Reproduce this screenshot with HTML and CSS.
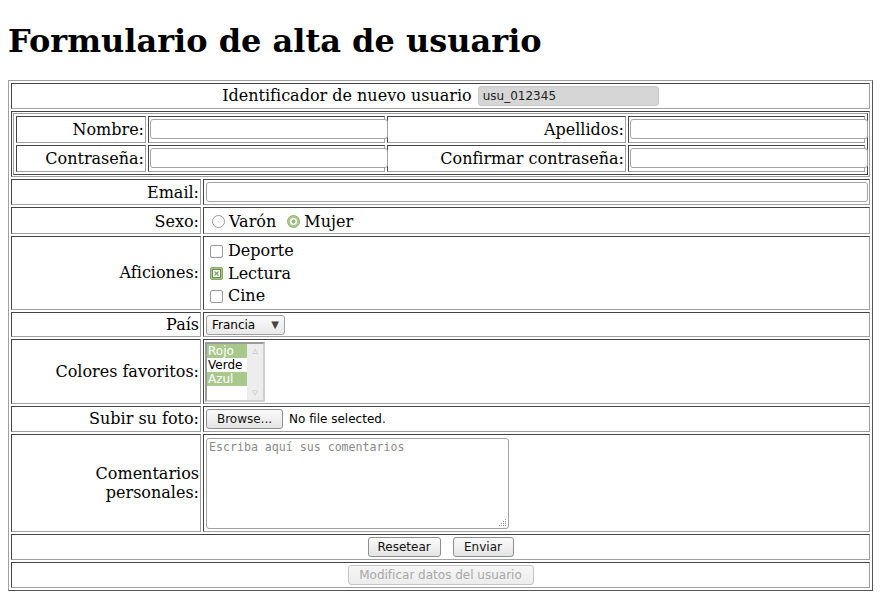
FILE: index.html
```html
<!DOCTYPE html>
<html lang="es">
<head>
<meta charset="utf-8">
<title>Formulario de alta de usuario</title>
<link rel="stylesheet" href="styles.css">
</head>
<body>
<h1 class="title">Formulario de alta de usuario</h1>
<form class="form">
<table class="grid">
  <colgroup><col class="col-label"><col></colgroup>
  <tr>
    <td colspan="2" class="center">Identificador de nuevo usuario <input class="field field-id" type="text" value="usu_012345" readonly></td>
  </tr>
  <tr>
    <td colspan="2" class="nest-cell">
      <table class="grid inner">
        <colgroup><col class="c1"><col class="c2"><col class="c3"><col class="c4"></colgroup>
        <tr>
          <td class="label">Nombre:</td>
          <td class="in"><input class="field field-half" type="text"></td>
          <td class="label">Apellidos:</td>
          <td class="in"><input class="field field-half" type="text"></td>
        </tr>
        <tr>
          <td class="label">Contraseña:</td>
          <td class="in"><input class="field field-half" type="password"></td>
          <td class="label">Confirmar contraseña:</td>
          <td class="in"><input class="field field-half" type="password"></td>
        </tr>
      </table>
    </td>
  </tr>
  <tr>
    <td class="label">Email:</td>
    <td class="value"><input class="field field-email" type="text"></td>
  </tr>
  <tr>
    <td class="label sexo-label">Sexo:</td>
    <td class="value sexo">
      <label class="opt first"><span class="radio"></span>Varón</label>
      <label class="opt"><span class="radio checked"></span>Mujer</label>
    </td>
  </tr>
  <tr>
    <td class="label">Aficiones:</td>
    <td class="value">
      <div class="stack">
        <label class="opt"><span class="check"></span>Deporte</label>
        <label class="opt"><span class="check checked"><svg width="9" height="9" viewBox="0 0 9 9"><rect x="0.5" y="0.5" width="8" height="8" fill="#fff" stroke="#6a8a4a"/><path d="M2.5 2.5 L6.5 6.5 M6.5 2.5 L2.5 6.5" stroke="#7f9f5f" stroke-width="1.2"/></svg></span>Lectura</label>
        <label class="opt"><span class="check"></span>Cine</label>
      </div>
    </td>
  </tr>
  <tr>
    <td class="label">País</td>
    <td class="value">
      <span class="select">Francia<span class="arrow">▼</span></span>
    </td>
  </tr>
  <tr>
    <td class="label">Colores favoritos:</td>
    <td class="value">
      <div class="listbox">
        <div class="options">
          <div class="option sel">Rojo</div>
          <div class="option">Verde</div>
          <div class="option sel">Azul</div>
        </div>
        <div class="scroll"><span>▵</span><span>▿</span></div>
      </div>
    </td>
  </tr>
  <tr>
    <td class="label">Subir su foto:</td>
    <td class="value"><button type="button" class="btn btn-browse">Browse...</button><span class="file-text">No file selected.</span></td>
  </tr>
  <tr>
    <td class="label">Comentarios personales:</td>
    <td class="value">
      <span class="ta-wrap">
        <textarea class="comments" placeholder="Escriba aquí sus comentarios"></textarea>
        <svg class="grip" width="9" height="9" viewBox="0 0 9 9">
          <g fill="#9a9a9a">
            <rect x="7" y="1" width="1" height="1"/>
            <rect x="5" y="3" width="1" height="1"/><rect x="7" y="3" width="1" height="1"/>
            <rect x="3" y="5" width="1" height="1"/><rect x="5" y="5" width="1" height="1"/><rect x="7" y="5" width="1" height="1"/>
            <rect x="1" y="7" width="1" height="1"/><rect x="3" y="7" width="1" height="1"/><rect x="5" y="7" width="1" height="1"/><rect x="7" y="7" width="1" height="1"/>
          </g>
        </svg>
      </span>
    </td>
  </tr>
  <tr>
    <td colspan="2" class="center"><button type="reset" class="btn btn-reset">Resetear</button><button type="submit" class="btn btn-send">Enviar</button></td>
  </tr>
  <tr>
    <td colspan="2" class="center"><button type="button" class="btn btn-mod" disabled>Modificar datos del usuario</button></td>
  </tr>
</table>
</form>
</body>
</html>
```
FILE: styles.css
```css
html, body {
  background: #fff;
}
body {
  margin: 8px;
  font-family: "DejaVu Serif", serif;
  font-size: 16px;
  color: #000;
}
.title {
  font-size: 32px;
  font-weight: bold;
  margin: 14px 0 20px;
}
.form {
  margin: 0;
}
.grid {
  width: 100%;
  border-collapse: separate;
  border-spacing: 2px;
  border: 1px solid;
  border-color: #a0a0a0 #555 #555 #a0a0a0;
}
.grid td {
  border: 1px solid;
  border-color: #444 #a0a0a0 #a0a0a0 #444;
  padding: 1px;
}
.col-label {
  width: 190px;
}
.label {
  text-align: right;
}
.center {
  text-align: center;
}
.inner {
  table-layout: fixed;
  border-color: #a0a0a0 #444 #444 #a0a0a0;
}
.c1 { width: 130px; }
.c2 { width: 237px; }
.c3 { width: 239px; }
.grid td.in {
  padding: 1px 0 1px 1px;
  white-space: nowrap;
}
.field {
  box-sizing: border-box;
  height: 20px;
  font-family: "DejaVu Sans", sans-serif;
  font-size: 12px;
  border: 1px solid #a3a3a3;
  border-radius: 3px;
  background: #fff;
  padding: 0 4px;
  margin: 1px 0;
  vertical-align: middle;
}
.field-id {
  width: 181px;
  background: #d6d6d6;
  border-color: #c9c9c9;
  color: #222;
  margin-left: 1px;
}
.field-half {
  width: 238px;
  margin: 1px 0 2px;
}
.field-email {
  width: 662px;
  margin: 1px 0 1px 1px;
}
.value {
  text-align: left;
}
.grid td.sexo,
.grid td.sexo-label {
  padding: 2px 1px 0;
}
.opt {
  display: inline-flex;
  align-items: center;
  margin-right: 6px;
  line-height: 23px;
}
.opt.first {
  margin-left: 7px;
}
.stack {
  display: flex;
  flex-direction: column;
  align-items: flex-start;
  padding: 2px 0 0 5px;
}
.stack .opt {
  line-height: 22.5px;
}
.radio {
  box-sizing: border-box;
  width: 13px;
  height: 13px;
  border: 1px solid #9a9a9a;
  border-radius: 50%;
  background: #fff;
  margin-right: 4px;
}
.radio.checked {
  border-color: #8fae72;
  background: radial-gradient(circle, #94b878 0 1.8px, #fff 2.3px 3.3px, #a8ca8c 3.8px);
}
.check {
  box-sizing: border-box;
  width: 13px;
  height: 13px;
  border: 1px solid #9a9a9a;
  border-radius: 2px;
  background: #fff;
  margin-right: 5px;
  display: inline-flex;
  align-items: center;
  justify-content: center;
}
.check.checked {
  background: #a6c98a;
  border-color: #86a66a;
}
.check svg {
  display: block;
}
.select {
  display: inline-flex;
  align-items: center;
  box-sizing: border-box;
  width: 79px;
  height: 20px;
  margin: 1px 0 0 1px;
  padding: 0 5px;
  border: 1px solid #9e9e9e;
  border-radius: 3px;
  background: linear-gradient(#fafafa, #e9e9e9);
  font-family: "DejaVu Sans", sans-serif;
  font-size: 12px;
  vertical-align: middle;
}
.arrow {
  margin-left: auto;
  font-size: 10px;
  color: #444;
}
.listbox {
  display: flex;
  box-sizing: border-box;
  width: 60px;
  height: 60px;
  margin: 1px 0 0;
  border: 2px solid;
  border-color: #9a9a9a #cfcfcf #cfcfcf #9a9a9a;
  background: #fff;
  font-family: "DejaVu Sans", sans-serif;
  font-size: 12px;
}
.options {
  width: 40px;
}
.option {
  height: 14px;
  line-height: 14px;
  padding-left: 1px;
}
.option.sel {
  background: #a9c98c;
  color: #fff;
}
.scroll {
  width: 16px;
  display: flex;
  flex-direction: column;
  justify-content: space-between;
  align-items: center;
  background: #ededed;
  color: #c7c7c7;
  font-size: 11px;
  line-height: 14px;
}
.btn {
  box-sizing: border-box;
  height: 20px;
  font-family: "DejaVu Sans", sans-serif;
  font-size: 12px;
  color: #111;
  border: 1px solid #8f8f8f;
  border-radius: 3px;
  background: linear-gradient(#fbfbfb, #e4e4e4);
  padding: 0 9px;
  vertical-align: middle;
}
.btn-browse {
  width: 77px;
  margin: 1px 0 1px 1px;
}
.file-text {
  font-family: "DejaVu Sans", sans-serif;
  font-size: 12px;
  margin-left: 6px;
  vertical-align: middle;
}
.ta-wrap {
  position: relative;
  display: block;
  width: 303px;
  margin: 2px 0 1px 1px;
}
.comments {
  box-sizing: border-box;
  display: block;
  width: 303px;
  height: 91px;
  margin: 0;
  border: 1px solid #a3a3a3;
  border-radius: 3px;
  padding: 1px 2px;
  font-family: "DejaVu Sans Mono", monospace;
  font-size: 11.6px;
  resize: none;
}
.comments::placeholder {
  color: #8a8a8a;
}
.grip {
  position: absolute;
  right: 2px;
  bottom: 2px;
}
.btn-reset {
  width: 73px;
  margin: 1px 6px 1px 0;
}
.btn-send {
  width: 61px;
  margin: 1px 0 1px 6px;
}
.btn-mod {
  width: 186px;
  margin: 1px 0;
  color: #a8a8a8;
  border-color: #c4c4c4;
  background: linear-gradient(#f6f6f6, #ececec);
}
```
